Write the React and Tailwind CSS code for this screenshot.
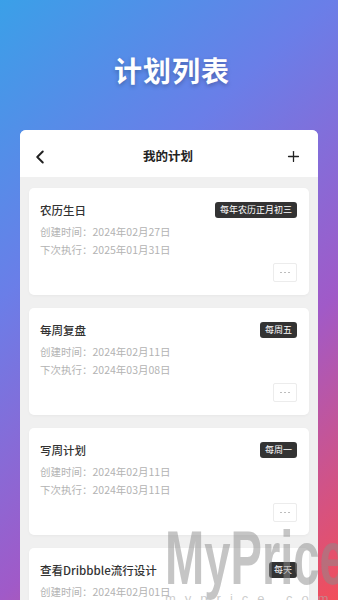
import React from 'react';
import {ChevronLeft,Plus} from 'lucide-react';

const plans=[
  {id: 1,title: '农历生日',tag: '每年农历正月初三',created: '2024年02月27日',next: '2025年01月31日'},
  {id: 2,title: '每周复盘',tag: '每周五',created: '2024年02月11日',next: '2024年03月08日'},
  {id: 3,title: '写周计划',tag: '每周一',created: '2024年02月11日',next: '2024年03月11日'},
  {id: 4,title: '查看Dribbble流行设计',tag: '每天',created: '2024年02月01日',next: '2024年02月29日'},
];

const font={fontFamily: '"Noto Sans CJK SC", "Noto Sans", sans-serif'};

const PlanCard=({plan})=> (
  <div className="bg-white rounded-[5px] shadow-[0_1px_3px_rgba(0,0,0,0.04)] pt-[14px] pb-[13px] pl-[11px] pr-[12px]">
    <div className="flex items-center justify-between h-4">
      <span className="text-[11.5px] text-[#333] font-medium leading-4">{plan.title}</span>
      <span className="bg-[#333] text-white text-[9px] leading-4 h-4 px-[5px] rounded-[3px]">{plan.tag}</span>
    </div>
    <div className="mt-[5px] text-[10.5px] leading-[18px] text-[#b3b3b3]">
      <p>创建时间：{plan.created}</p>
      <p>下次执行：{plan.next}</p>
    </div>
    <div className="flex justify-end mt-[4px]">
      <button className="w-6 h-[19px] border border-[#ececec] rounded-[2px] flex items-center justify-center gap-[2px]">
        <span className="w-[2px] h-[1px] bg-[#bdbdbd]" />
        <span className="w-[2px] h-[1px] bg-[#bdbdbd]" />
        <span className="w-[2px] h-[1px] bg-[#bdbdbd]" />
      </button>
    </div>
  </div>
);

const App=()=> {
  return (
    <div
      className="relative h-screen overflow-hidden bg-[linear-gradient(138deg,#3aa0e8_0%,#6a7ee8_33%,#a05ac8_66%,#f24e5a_100%)]"
      style={font}
    >
      <div className="h-[130px] flex items-center justify-center pt-[10px] pl-[6px]">
        <h1 className="text-white text-[28px] font-bold tracking-[1px] [text-shadow:0_2px_4px_rgba(0,0,0,0.25)]">
          计划列表
        </h1>
      </div>

      <div className="mx-5 bg-[#f0f0f0] rounded-t-[6px] overflow-hidden">
        <div className="h-[47px] bg-white flex items-center justify-between pt-[6px] pl-[9px] pr-[16px]">
          <ChevronLeft size={22} strokeWidth={2.2} className="text-[#222]" />
          <span className="text-[12.5px] font-bold text-[#222]">我的计划</span>
          <Plus size={17} strokeWidth={1.8} className="text-[#222]" />
        </div>
        <div className="px-[9px] pt-[11px] flex flex-col gap-[13px]">
          {plans.map((plan)=> (
            <PlanCard key={plan.id} plan={plan} />
          ))}
        </div>
      </div>

      <div className="absolute left-[165px] top-[520px] pointer-events-none select-none">
        <div
          className="text-[76px] font-bold leading-none text-[rgba(140,140,140,0.5)] origin-left scale-x-[0.62] whitespace-nowrap"
          style={{fontFamily: '"Liberation Sans", sans-serif'}}
        >
          MyPrice
        </div>
        <div
          className="text-[13px] leading-none -mt-[4px] text-[rgba(170,170,170,0.6)] tracking-[9px]"
          style={{fontFamily: '"Liberation Sans", sans-serif'}}
        >
          myprice.com
        </div>
      </div>
    </div>
  );
};

export default App;
